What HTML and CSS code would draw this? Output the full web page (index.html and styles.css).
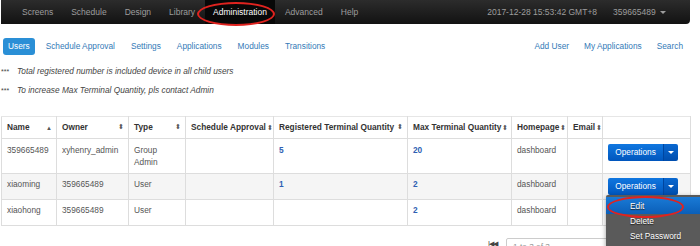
FILE: index.html
```html
<!DOCTYPE html>
<html lang="en">
<head>
  <meta charset="UTF-8" />
  <title>Administration - Users</title>
  <link rel="stylesheet" href="styles.css">
</head>
<body>
  <div class="page">
    <div class="navbar">
      <ul class="nav-main">
        <li><a>Screens</a></li>
        <li><a>Schedule</a></li>
        <li><a>Design</a></li>
        <li><a>Library</a></li>
        <li class="active"><a>Administration</a></li>
        <li><a>Advanced</a></li>
        <li><a>Help</a></li>
      </ul>
      <div class="nav-right">
        <span class="clock">2017-12-28 15:53:42 GMT+8</span>
        <span class="user">359665489 <b class="caret"></b></span>
      </div>
    </div>
    <span class="mark mark-admin"></span>

    <div class="subnav">
      <ul class="pills">
        <li class="active"><a>Users</a></li>
        <li><a>Schedule Approval</a></li>
        <li><a>Settings</a></li>
        <li><a>Applications</a></li>
        <li><a>Modules</a></li>
        <li><a>Transitions</a></li>
      </ul>
      <ul class="links-right">
        <li><a>Add User</a></li>
        <li><a>My Applications</a></li>
        <li><a>Search</a></li>
      </ul>
    </div>

    <div class="notes">
      <p><span class="stars">***</span><em>Total registered number is included device in all child users</em></p>
      <p><span class="stars">***</span><em>To increase Max Terminal Quantity, pls contact Admin</em></p>
    </div>

    <table class="grid">
      <colgroup>
        <col class="c-name"><col class="c-owner"><col class="c-type"><col class="c-appr">
        <col class="c-reg"><col class="c-max"><col class="c-home"><col class="c-mail"><col class="c-ops">
      </colgroup>
      <thead>
        <tr>
          <th>Name<span class="sort asc">▲</span></th>
          <th>Owner<span class="sort">⬍</span></th>
          <th>Type<span class="sort">⬍</span></th>
          <th>Schedule Approval<span class="sort tight">⬍</span></th>
          <th>Registered Terminal Quantity<span class="sort">⬍</span></th>
          <th>Max Terminal Quantity<span class="sort tight">⬍</span></th>
          <th>Homepage<span class="sort tight">⬍</span></th>
          <th>Email<span class="sort tight">⬍</span></th>
          <th></th>
        </tr>
      </thead>
      <tbody>
        <tr>
          <td>359665489</td>
          <td>xyhenry_admin</td>
          <td>Group<br>Admin</td>
          <td></td>
          <td><a class="num">5</a></td>
          <td><a class="num">20</a></td>
          <td>dashboard</td>
          <td></td>
          <td><div class="btn-split"><span class="btn-main">Operations</span><span class="btn-caret"><b class="caret"></b></span></div></td>
        </tr>
        <tr class="odd">
          <td>xiaoming</td>
          <td>359665489</td>
          <td>User</td>
          <td></td>
          <td><a class="num">1</a></td>
          <td><a class="num">2</a></td>
          <td>dashboard</td>
          <td></td>
          <td><div class="btn-split"><span class="btn-main">Operations</span><span class="btn-caret"><b class="caret"></b></span></div></td>
        </tr>
        <tr>
          <td>xiaohong</td>
          <td>359665489</td>
          <td>User</td>
          <td></td>
          <td></td>
          <td><a class="num">2</a></td>
          <td>dashboard</td>
          <td></td>
          <td><div class="btn-split"><span class="btn-main">Operations</span><span class="btn-caret"><b class="caret"></b></span></div></td>
        </tr>
      </tbody>
    </table>

    <div class="pager">
      <span class="pager-arrows">I◀◀</span>
      <span class="pager-box">1 to 3 of 3</span>
    </div>

    <ul class="op-menu">
      <li class="hover">Edit</li>
      <li>Delete</li>
      <li>Set Password</li>
    </ul>
    <span class="mark mark-edit"></span>
  </div>
</body>
</html>
```

FILE: styles.css
```css
html, body {
  margin: 0;
  padding: 0;
  overflow: hidden;
}
body {
  font-family: "Liberation Sans", Arial, sans-serif;
  font-size: 8.3px;
  color: #555;
  background: #fff;
}
ul {
  list-style: none;
  margin: 0;
  padding: 0;
}
a {
  cursor: pointer;
}
.page {
  position: relative;
  width: 700px;
  height: 246px;
  overflow: hidden;
}

/* top bar */
.navbar {
  margin-left: 1px;
  width: 689px;
  height: 24px;
  display: flex;
  align-items: center;
  justify-content: space-between;
  background: linear-gradient(#2c2c2c, #121212);
  border-radius: 0 0 4px 0;
}
.nav-main {
  display: flex;
  height: 24px;
  padding-left: 12px;
  font-size: 8.5px;
}
.nav-main li {
  display: flex;
  align-items: center;
}
.nav-main a {
  display: block;
  padding: 0 9px;
  line-height: 24px;
  color: #9d9d9d;
}
.nav-main li.active a {
  color: #fff;
  background: #080808;
  padding: 0 8px;
  margin: 0 1px;
}
.nav-right {
  display: flex;
  align-items: center;
  gap: 16px;
  padding-right: 24px;
  color: #9d9d9d;
  font-size: 8.5px;
}
.caret {
  display: inline-block;
  width: 0;
  height: 0;
  border-top: 3px solid #9d9d9d;
  border-left: 3px solid transparent;
  border-right: 3px solid transparent;
  vertical-align: middle;
  margin-left: 2px;
}

/* red hand-drawn marks */
.mark {
  position: absolute;
  border: 2px solid #e0231f;
  border-radius: 50%;
}
.mark-admin {
  left: 197px;
  top: 2px;
  width: 74px;
  height: 20px;
}
.mark-edit {
  left: 607px;
  top: 196px;
  width: 73px;
  height: 18px;
}

/* sub navigation */
.subnav {
  display: flex;
  justify-content: space-between;
  margin-top: 14px;
  height: 17px;
}
.pills,
.links-right {
  display: flex;
  gap: 6px;
}
.pills {
  padding-left: 3px;
}
.pills a,
.links-right a {
  display: block;
  padding: 0 5px;
  line-height: 17px;
  color: #337ab7;
  border-radius: 3px;
}
.pills li.active a {
  background: #2a8fd6;
  color: #fff;
}
.links-right {
  padding-right: 12px;
  gap: 5px;
}

/* notes */
.notes {
  margin-top: 7px;
}
.notes p {
  margin: 0;
  line-height: 19px;
  color: #444;
}
.stars {
  display: inline-block;
  width: 16px;
  padding-left: 1px;
  font-size: 7px;
}

/* users table */
.grid {
  margin-top: 16px;
  margin-left: 1px;
  width: 689px;
  table-layout: fixed;
  border-collapse: collapse;
}
.c-name { width: 55px; }
.c-owner { width: 72px; }
.c-type { width: 57px; }
.c-appr { width: 88px; }
.c-reg { width: 134px; }
.c-max { width: 104px; }
.c-home { width: 56px; }
.c-mail { width: 35px; }
.c-ops { width: 88px; }
.grid th,
.grid td {
  border: 1px solid #ddd;
  text-align: left;
  vertical-align: top;
  padding: 5px 5px;
  line-height: 12px;
}
.grid th {
  color: #333;
  font-weight: bold;
  white-space: nowrap;
  overflow: hidden;
  padding: 4px 4px 4px 5px;
  border-top: 1px solid #e6e6e6;
}
.grid tbody td {
  padding: 4px 5px;
}
.grid tbody tr:first-child td {
  padding: 5px;
}
.grid tr.odd td {
  background: #f5f5f5;
}
.sort {
  float: right;
  font-size: 7px;
  color: #555;
  font-weight: normal;
}
.sort.asc {
  font-size: 6px;
  padding-top: 1px;
}
.sort.tight {
  float: none;
  margin-left: 1px;
}
.num {
  color: #2f5fb3;
  font-weight: bold;
}

/* split button */
.btn-split {
  display: flex;
  width: 70px;
  height: 17px;
  border-radius: 2px;
  overflow: hidden;
}
.btn-main {
  flex: 1;
  text-align: center;
  line-height: 17px;
  color: #fff;
  background: linear-gradient(#1077e0, #0056bd);
}
.btn-caret {
  width: 14px;
  display: flex;
  align-items: center;
  justify-content: center;
  background: linear-gradient(#0a68d0, #004eae);
  border-left: 1px solid #0046a0;
}
.btn-caret .caret {
  border-top-color: #fff;
  margin: 0;
}

/* pager */
.pager {
  display: flex;
  align-items: flex-start;
  margin-top: 12px;
  padding-left: 488px;
}
.pager-arrows {
  color: #444;
  font-size: 7px;
  letter-spacing: -1px;
  padding-top: 2px;
  width: 18px;
}
.pager-box {
  width: 100px;
  height: 16px;
  border: 1px solid #ccc;
  border-radius: 2px;
  padding-left: 6px;
  line-height: 16px;
  color: #999;
}

/* operations dropdown */
.op-menu {
  position: absolute;
  left: 606px;
  top: 195px;
  width: 100px;
  padding: 2px 0 4px;
  background: #5a5a5a;
  box-shadow: 0 2px 5px rgba(0,0,0,0.4);
  border-radius: 2px;
}
.op-menu li {
  line-height: 15px;
  padding-left: 24px;
  color: #fff;
  text-shadow: 0 1px 1px #222;
}
.op-menu li.hover {
  padding-top: 2px;
  background: linear-gradient(#1a7ad6, #0b5fb8);
}
```
